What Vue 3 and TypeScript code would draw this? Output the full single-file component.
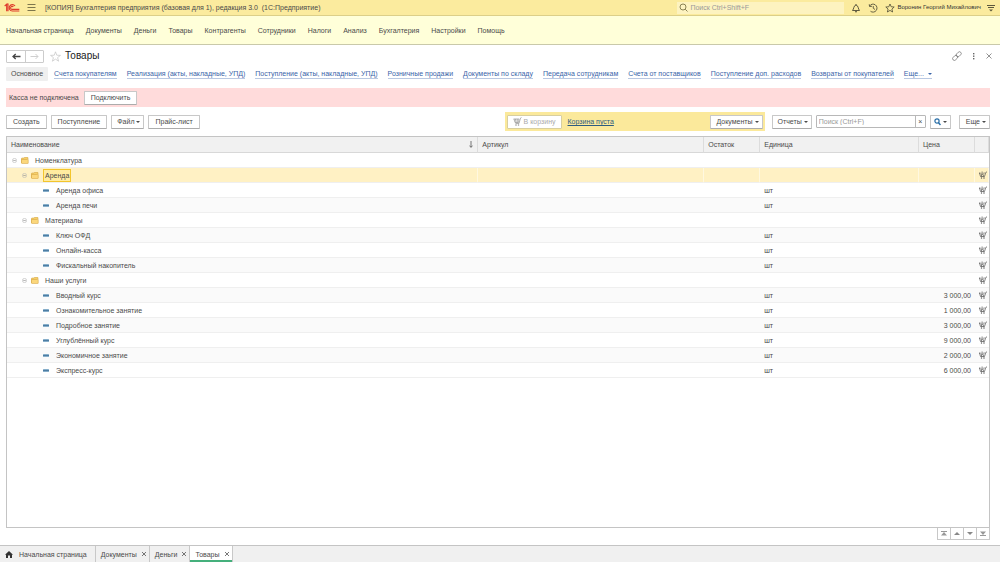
<script setup lang="ts">
import { ref } from 'vue'

interface Row {
  name: string
  level: number
  group: boolean
  unit?: string
  price?: string
}

const sections: string[] = [
  'Начальная страница', 'Документы', 'Деньги', 'Товары', 'Контрагенты', 'Сотрудники',
  'Налоги', 'Анализ', 'Бухгалтерия', 'Настройки', 'Помощь',
]

const links: string[] = [
  'Счета покупателям', 'Реализация (акты, накладные, УПД)', 'Поступление (акты, накладные, УПД)',
  'Розничные продажи', 'Документы по складу', 'Передача сотрудникам', 'Счета от поставщиков',
  'Поступление доп. расходов', 'Возвраты от покупателей',
]

const rows: Row[] = [
  { name: 'Номенклатура', level: 0, group: true },
  { name: 'Аренда', level: 1, group: true },
  { name: 'Аренда офиса', level: 2, group: false, unit: 'шт' },
  { name: 'Аренда печи', level: 2, group: false, unit: 'шт' },
  { name: 'Материалы', level: 1, group: true },
  { name: 'Ключ ОФД', level: 2, group: false, unit: 'шт' },
  { name: 'Онлайн-касса', level: 2, group: false, unit: 'шт' },
  { name: 'Фискальный накопитель', level: 2, group: false, unit: 'шт' },
  { name: 'Наши услуги', level: 1, group: true },
  { name: 'Вводный курс', level: 2, group: false, unit: 'шт', price: '3 000,00' },
  { name: 'Ознакомительное занятие', level: 2, group: false, unit: 'шт', price: '1 000,00' },
  { name: 'Подробное занятие', level: 2, group: false, unit: 'шт', price: '3 000,00' },
  { name: 'Углублённый курс', level: 2, group: false, unit: 'шт', price: '9 000,00' },
  { name: 'Экономичное занятие', level: 2, group: false, unit: 'шт', price: '2 000,00' },
  { name: 'Экспресс-курс', level: 2, group: false, unit: 'шт', price: '6 000,00' },
]

const windows: string[] = ['Документы', 'Деньги', 'Товары']
const selected = ref('Аренда')
const activeWindow = ref('Товары')
const globalSearch = ref('')
const listSearch = ref('')
</script>

<template>
  <div class="app">
    <header class="titlebar">
      <svg class="logo" viewBox="0 0 48 30" role="img" aria-label="1C">
        <g fill="none" stroke="#df3b2c" stroke-width="3.4">
          <path d="M2 9 L8 4 V25 M12 25 V3 H8" />
          <path d="M33 9 A9.5 9.5 0 1 0 25 24 H46" />
          <path d="M28 12 A4.5 4.5 0 1 0 25 19 H46" />
        </g>
      </svg>
      <button class="icon-btn" aria-label="Меню">
        <svg width="9" height="9" viewBox="0 0 9 9"><path d="M.5 1.5h8M.5 4.5h8M.5 7.5h8" stroke="#7d764c" stroke-width="1" /></svg>
      </button>
      <span class="app-title">[КОПИЯ] Бухгалтерия предприятия (базовая для 1), редакция 3.0&nbsp; (1С:Предприятие)</span>
      <label class="global-search">
        <svg width="9" height="9" viewBox="0 0 9 9" fill="none" stroke="#8a8254"><circle cx="4" cy="4" r="3" /><path d="M6.2 6.2L8.5 8.5" /></svg>
        <input v-model="globalSearch" type="text" placeholder="Поиск Ctrl+Shift+F" aria-label="Поиск" />
      </label>
      <button class="icon-btn" aria-label="Уведомления">
        <svg width="10" height="10" viewBox="0 0 20 20" fill="none" stroke="#4d4a35" stroke-width="1.8"><path d="M3 15 C6 12 5 5 10 4 C15 5 14 12 17 15 Z M10 4V2" /><path d="M8 17.5h4" stroke-width="2.4" /></svg>
      </button>
      <button class="icon-btn" aria-label="История">
        <svg width="10" height="10" viewBox="0 0 20 20" fill="none" stroke="#4d4a35" stroke-width="1.7"><path d="M3.2 6 A8 8 0 1 1 5 16.5 M2.5 2.5 L3 7 L8 6.5 M10.5 6 V10.5 L14 13" /></svg>
      </button>
      <button class="icon-btn" aria-label="Избранное">
        <svg width="10" height="10" viewBox="0 0 20 20" fill="none" stroke="#4d4a35" stroke-width="1.6"><path d="M10 2 L12.4 7.5 L18.4 8 L13.8 12 L15.2 18 L10 14.8 L4.8 18 L6.2 12 L1.6 8 L7.6 7.5 Z" /></svg>
      </button>
      <button class="user">Воронин Георгий Михайлович</button>
      <button class="icon-btn" aria-label="Сервис">
        <svg width="8" height="9" viewBox="0 0 8 9"><path d="M0 2.5h8M1 4.5h6" stroke="#5c573c" /><path d="M2 6.5h4L4 8.5z" fill="#5c573c" /></svg>
      </button>
    </header>

    <nav class="sections" aria-label="Разделы">
      <a v-for="s in sections" :key="s" href="#">{{ s }}</a>
    </nav>

    <main class="page">
      <div class="heading">
        <div class="history">
          <button aria-label="Назад">
            <svg width="9" height="7" viewBox="0 0 9 7" fill="none" stroke="#444" stroke-width="1.3"><path d="M1 3.5h7.5M3.7 1L1 3.5L3.7 6" /></svg>
          </button>
          <button aria-label="Вперед" disabled>
            <svg width="9" height="7" viewBox="0 0 9 7" fill="none" stroke="#cfcfcf"><path d="M.5 3.5H8M5.5 1L8 3.5L5.5 6" /></svg>
          </button>
        </div>
        <button class="icon-btn favorite" aria-label="Добавить в избранное">
          <svg width="11" height="11" viewBox="0 0 20 20" fill="none" stroke="#c4c4c4" stroke-width="1.3"><path d="M10 1.5 L12.3 7.6 L19 8 L13.8 12 L15.6 18.5 L10 14.8 L4.4 18.5 L6.2 12 L1 8 L7.7 7.6 Z" /></svg>
        </button>
        <h1>Товары</h1>
        <div class="window-tools">
          <button class="icon-btn" aria-label="Ссылка">
            <svg width="10" height="10" viewBox="0 0 20 20" fill="none" stroke="#777" stroke-width="1.5"><g transform="rotate(-45 10 10)"><rect x="-1" y="6.5" width="11.5" height="7" rx="3.5" /><rect x="9" y="6.5" width="11.5" height="7" rx="3.5" /></g></svg>
          </button>
          <button class="icon-btn" aria-label="Действия">
            <svg width="4" height="8" viewBox="0 0 4 8" fill="#666"><rect x="1" y="1" width="1.4" height="1.4" /><rect x="1" y="3.5" width="1.4" height="1.4" /><rect x="1" y="6" width="1.4" height="1.4" /></svg>
          </button>
          <button class="icon-btn" aria-label="Закрыть">
            <svg width="6" height="6" viewBox="0 0 6 6" stroke="#777" stroke-width=".8"><path d="M.5 .5l5 5M5.5 .5l-5 5" /></svg>
          </button>
        </div>
      </div>

      <nav class="links" aria-label="Переходы">
        <a class="current" href="#">Основное</a>
        <a v-for="l in links" :key="l" class="link" href="#">{{ l }}</a>
        <a class="link" href="#">Еще... <i class="caret"></i></a>
      </nav>

      <div class="alert">
        <span>Касса не подключена</span>
        <button class="btn">Подключить</button>
      </div>

      <div class="toolbar">
        <button class="btn">Создать</button>
        <button class="btn">Поступление</button>
        <button class="btn drop">Файл <i class="caret"></i></button>
        <button class="btn">Прайс-лист</button>
        <div class="basket">
          <button class="btn" disabled>
            <svg width="9" height="9" viewBox="0 0 18 18" fill="none" stroke="#999" stroke-width="1.5"><path d="M1 4h11l-1 7H4L2 4M5 4l1 7M8.5 4v7M17 1l-2 1-3 11H5" /><circle cx="6" cy="16" r="1" /><circle cx="11" cy="16" r="1" /></svg>
            В корзину
          </button>
          <a href="#">Корзина пуста</a>
          <button class="btn drop docs">Документы <i class="caret"></i></button>
        </div>
        <button class="btn drop">Отчеты <i class="caret"></i></button>
        <div class="search">
          <input v-model="listSearch" type="text" placeholder="Поиск (Ctrl+F)" aria-label="Поиск в списке" />
          <button aria-label="Очистить" @click="listSearch = ''">×</button>
        </div>
        <button class="btn drop find" aria-label="Найти">
          <svg width="7" height="8" viewBox="0 0 7 8" fill="none" stroke="#2c70a8"><circle cx="3" cy="3" r="2.1" stroke-width="1.2" /><path d="M4.5 4.7L6.5 7" stroke-width="1.5" /></svg>
          <i class="caret"></i>
        </button>
        <button class="btn drop more">Еще <i class="caret"></i></button>
      </div>

      <div class="list">
        <table>
          <colgroup>
            <col class="c-name" /><col class="c-art" /><col class="c-rest" /><col class="c-unit" /><col class="c-price" /><col class="c-cart" />
          </colgroup>
          <thead>
            <tr>
              <th><div class="sorted"><span>Наименование</span><svg width="4" height="7" viewBox="0 0 4 7" fill="none" stroke="#666" stroke-width=".9"><path d="M2 0v6.300M.4 4.600L2 6.300L3.600 4.600" /></svg></div></th>
              <th>Артикул</th>
              <th>Остаток</th>
              <th>Единица</th>
              <th>Цена</th>
              <th></th>
            </tr>
          </thead>
          <tbody>
            <tr v-for="(r, i) in rows" :key="r.name" :class="{ selected: r.name === selected, even: i % 2 === 1 }" @click="selected = r.name">
              <td>
                <div class="node" :class="'level-' + r.level">
                  <template v-if="r.group">
                    <svg width="5" height="5" viewBox="0 0 5 5" fill="none" stroke="#b5b5b5" stroke-width=".6"><circle cx="2.5" cy="2.5" r="2.1" /><path d="M1.2 2.5h2.6" stroke="#888" /></svg>
                    <svg class="folder" width="8" height="7" viewBox="0 0 16 14"><path d="M1 12V3q0-1 1-1h4l1.5-1.5H13q1 0 1 1.5v2" fill="#f5cf6b" stroke="#c9952f" /><path d="M1 5h13.5v7q0 1-1 1H2q-1 0-1-1z" fill="#fbd77c" stroke="#d3a03c" /></svg>
                  </template>
                  <svg v-else class="dash" width="6" height="3" viewBox="0 0 6 3"><rect width="6" height="3" rx=".5" fill="#86aeca" /><rect y="1" width="6" height="1" fill="#4d7da3" /></svg>
                  <span class="name">{{ r.name }}</span>
                </div>
              </td>
              <td></td>
              <td></td>
              <td>{{ r.unit }}</td>
              <td class="price">{{ r.price }}</td>
              <td class="cart">
                <svg v-if="r.level > 0" width="8" height="8" viewBox="0 0 16 16" fill="none" stroke="#444" stroke-width="1.3"><path d="M0 4h3M9 4h2.500M1 4l2 7h8L13.500 3L16 1.500M4.500 7l1 4M9 7l-.5 4M6.200 1v6M4 5l2.200 2.500L8.500 5" /><circle cx="5" cy="14" r=".8" /><circle cx="10" cy="14" r=".8" /></svg>
              </td>
            </tr>
          </tbody>
        </table>
      </div>

      <div class="pager">
        <button aria-label="В начало"><svg width="6" height="5" viewBox="0 0 6 5"><path d="M0 .5h6" stroke="#999" /><path d="M3 1L6 4.500H0z" fill="#999" /></svg></button>
        <button aria-label="Вверх"><svg width="6" height="5" viewBox="0 0 6 5"><path d="M3 1L6 4H0z" fill="#888" /></svg></button>
        <button aria-label="Вниз"><svg width="6" height="5" viewBox="0 0 6 5"><path d="M3 4L6 1H0z" fill="#888" /></svg></button>
        <button aria-label="В конец"><svg width="6" height="5" viewBox="0 0 6 5"><path d="M0 4.500h6" stroke="#999" /><path d="M3 4L6 .5H0z" fill="#999" /></svg></button>
      </div>
    </main>

    <footer class="taskbar">
      <button class="task home">
        <svg width="8" height="7" viewBox="0 0 8 7" fill="#333"><path d="M4 0L8 3.700H7V7H5V4.500H3V7H1V3.700H0z" /></svg>
        Начальная страница
      </button>
      <div v-for="w in windows" :key="w" class="task" :class="{ active: w === activeWindow }">
        <button @click="activeWindow = w">{{ w }}</button>
        <button :aria-label="'Закрыть ' + w">
          <svg width="4" height="4" viewBox="0 0 4 4" stroke="#555" stroke-width=".8"><path d="M0 0l4 4M4 0L0 4" /></svg>
        </button>
      </div>
    </footer>
  </div>
</template>

<style>
body {
  margin: 0;
}
</style>

<style scoped>
.app {
  display: flex;
  flex-direction: column;
  min-height: 100vh;
  background: #fff;
  color: #4a4a4a;
  font: 7px/9px "Liberation Sans", Arial, sans-serif;
}
.app *,
.app *::before {
  box-sizing: border-box;
}
svg {
  display: block;
  flex: none;
}
button,
input {
  margin: 0;
  padding: 0;
  border: 0;
  background: none;
  color: inherit;
  font: inherit;
}
a {
  color: inherit;
  text-decoration: none;
}
.icon-btn {
  display: flex;
  align-items: center;
  justify-content: center;
}
.titlebar {
  display: flex;
  align-items: center;
  gap: 7px;
  height: 16px;
  padding: 0 5px 0 4px;
  background: #fbeb9e;
  border-bottom: 1px solid #dccf88;
}
.logo {
  width: 16px;
  height: 10px;
}
.app-title {
  flex: 1;
  padding-left: 2px;
  white-space: nowrap;
}
.global-search {
  display: flex;
  align-items: center;
  gap: 2px;
  width: 167px;
  height: 12px;
  padding: 0 2px;
  background: #fdf3c0;
}
.global-search input {
  flex: 1;
  min-width: 0;
  outline: 0;
}
input::placeholder {
  color: #999;
  opacity: 1;
}
.user {
  margin: 0 -1px 0 -5px;
  font-size: 6px;
  color: #333;
  white-space: nowrap;
}
.sections {
  display: flex;
  align-items: center;
  gap: 12px;
  height: 29px;
  padding: 0 6px;
  background: #ffffd9;
  border-bottom: 1px solid #c9c9aa;
}
.page {
  display: flex;
  flex: 1;
  flex-direction: column;
  padding: 4px 10px 5px 6px;
}
.heading {
  display: flex;
  align-items: center;
  height: 14px;
}
.history {
  display: flex;
  height: 13px;
  border: 1px solid #ccc;
  border-radius: 1px;
}
.history button {
  display: flex;
  align-items: center;
  justify-content: center;
  width: 18px;
}
.history button + button {
  border-left: 1px solid #ccc;
}
.favorite {
  margin: 0 4px 0 6px;
}
h1 {
  margin: 0;
  font-size: 10px;
  font-weight: 400;
  line-height: 14px;
  color: #222;
}
.window-tools {
  display: flex;
  align-items: center;
  gap: 10px;
  margin-left: auto;
  margin-right: -2px;
}
.links {
  display: flex;
  align-items: center;
  gap: 10px;
  height: 14px;
  margin-top: 4px;
  white-space: nowrap;
}
.current {
  padding: 2px 5px 3px;
  margin-right: -4px;
  background: #efefef;
  border-radius: 1px;
}
.link {
  color: #3a64a8;
  border-bottom: 1px solid #b9c8e2;
}
.caret {
  display: inline-block;
  vertical-align: 1px;
  border: 2px solid transparent;
  border-top-color: currentColor;
  border-bottom: 0;
}
.alert {
  display: flex;
  align-items: center;
  gap: 5px;
  height: 19px;
  margin-top: 7px;
  padding: 0 3px;
  background: #ffdbdb;
}
.btn {
  display: flex;
  align-items: center;
  justify-content: center;
  gap: 2px;
  height: 14px;
  padding: 0 6px;
  background: #fff;
  border: 1px solid #c8c8c8;
  border-bottom-color: #acacac;
  border-radius: 1px;
  white-space: nowrap;
}
.btn:disabled {
  padding: 0 5px;
  color: #aaa;
  border-color: #d8cfa0;
}
.drop {
  padding: 0 3px 0 5px;
}
.link .caret {
  margin-left: 2px;
}
.toolbar {
  display: flex;
  align-items: center;
  gap: 4px;
  height: 19px;
  margin-top: 5px;
}
.basket {
  display: flex;
  align-items: center;
  gap: 6px;
  width: 260px;
  height: 19px;
  margin-left: auto;
  margin-right: 3px;
  padding: 0 2px;
  background: #fbe99b;
}
.basket a {
  color: #2d5c80;
  text-decoration: underline;
}
.docs {
  margin-left: auto;
}
.search {
  display: flex;
  width: 110px;
  height: 13px;
  border: 1px solid #b8b8b8;
  border-radius: 1px;
}
.search input {
  flex: 1;
  min-width: 0;
  padding: 0 2px;
  outline: 0;
}
.search button {
  width: 10px;
  border-left: 1px solid #b8b8b8;
}
.find {
  padding: 0 3px;
}
.more {
  margin-left: 4px;
  padding-left: 6px;
}
.list {
  flex: 1;
  margin-top: 5px;
  border: 1px solid #c4c4c4;
}
table {
  width: 100%;
  table-layout: fixed;
  border-collapse: separate;
  border-spacing: 0;
}
.c-name {
  width: 48%;
}
.c-art {
  width: 23%;
}
.c-rest {
  width: 56px;
}
.c-price {
  width: 56px;
}
.c-cart {
  width: 14px;
}
th {
  height: 16px;
  padding: 0 4px;
  background: #f1f1f1;
  border-right: 1px solid #dcdcdc;
  border-bottom: 1px solid #d8d8d8;
  font-weight: 400;
  text-align: left;
}
.sorted {
  display: flex;
  align-items: center;
  justify-content: space-between;
}
td {
  height: 15px;
  padding: 0 4px;
  border-bottom: 1px solid #efefef;
}
.even td {
  background: #fafafa;
}
.selected td {
  background: #fff1c4;
  border-right: 1px solid #fff8e0;
}
.node {
  display: flex;
  align-items: center;
  height: 14px;
}
.level-0 {
  padding-left: 1px;
}
.level-1 {
  padding-left: 11px;
}
.level-2 {
  padding-left: 32px;
}
.folder {
  margin: 0 4px;
}
.name {
  padding: 1px;
  border: 1px solid transparent;
}
.dash {
  margin-right: 5px;
}
.selected .name {
  background: #ffeba0;
  border-color: #f3c52c;
}
.price {
  text-align: right;
}
.cart {
  padding: 0 2px 0 4px;
}
.pager {
  display: flex;
  align-self: flex-end;
  height: 12px;
  border: 1px solid #c8c8c8;
  border-top: 0;
}
.pager button {
  display: flex;
  align-items: center;
  justify-content: center;
  width: 12px;
}
.pager button + button {
  width: 13px;
  border-left: 1px solid #c8c8c8;
}
.taskbar {
  display: flex;
  height: 17px;
  background: #f0f0f0;
  border-top: 1px solid #c4c4c4;
}
.task {
  display: flex;
  align-items: center;
  gap: 5px;
  padding: 0 3px 0 5px;
  border-right: 1px solid #c8c8c8;
}
.home {
  gap: 6px;
  padding-right: 8px;
}
.active {
  background: #fff;
  box-shadow: inset 0 -2px #45b07c;
}
</style>
